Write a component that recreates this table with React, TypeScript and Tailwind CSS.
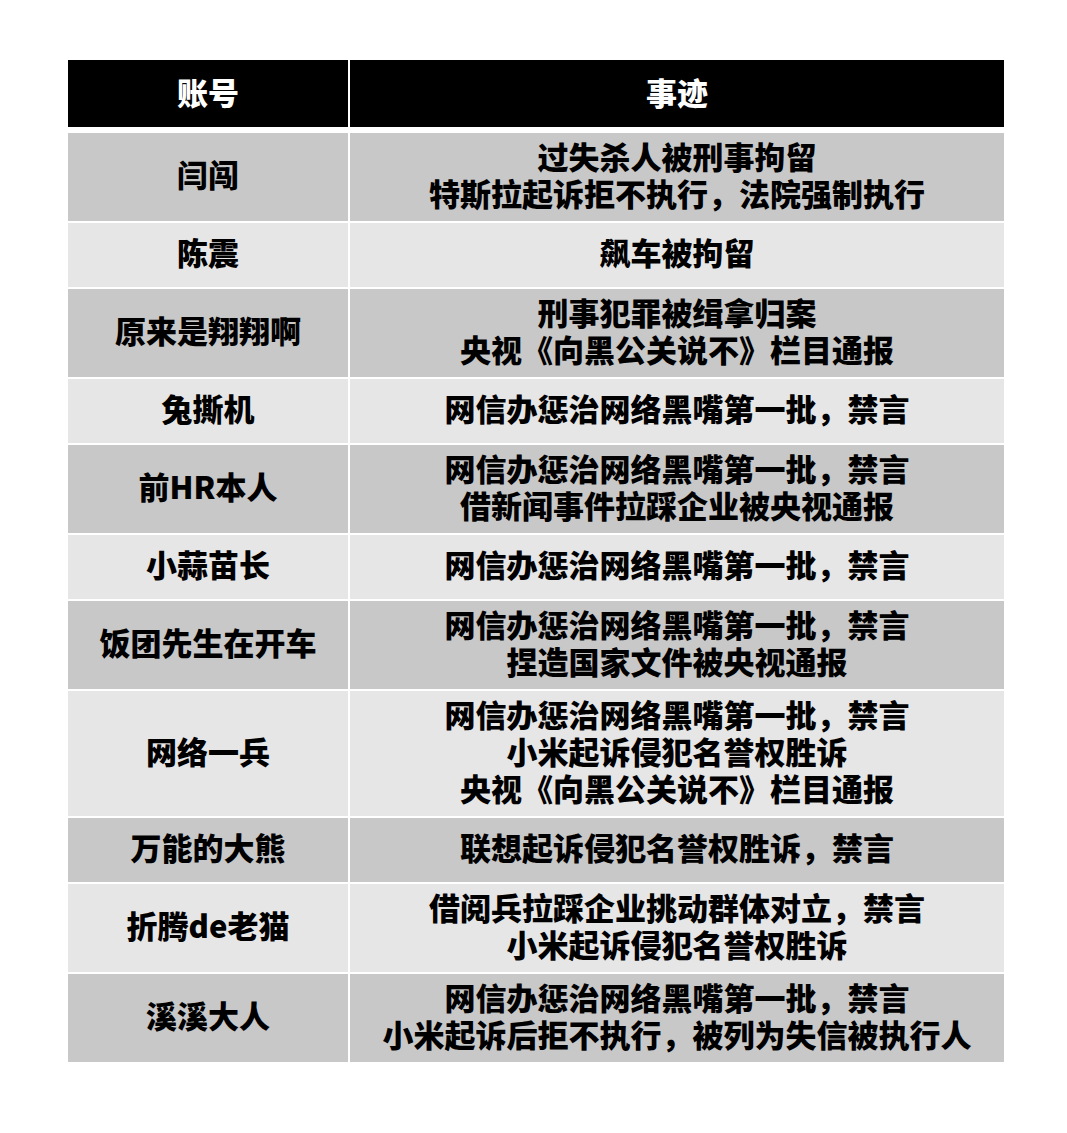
const rows: { name: string; events: string[]; tone: 'dark' | 'light' }[] = [
  { name: '闫闯', events: ['过失杀人被刑事拘留', '特斯拉起诉拒不执行，法院强制执行'], tone: 'dark' },
  { name: '陈震', events: ['飙车被拘留'], tone: 'light' },
  { name: '原来是翔翔啊', events: ['刑事犯罪被缉拿归案', '央视《向黑公关说不》栏目通报'], tone: 'dark' },
  { name: '兔撕机', events: ['网信办惩治网络黑嘴第一批，禁言'], tone: 'light' },
  { name: '前HR本人', events: ['网信办惩治网络黑嘴第一批，禁言', '借新闻事件拉踩企业被央视通报'], tone: 'dark' },
  { name: '小蒜苗长', events: ['网信办惩治网络黑嘴第一批，禁言'], tone: 'light' },
  { name: '饭团先生在开车', events: ['网信办惩治网络黑嘴第一批，禁言', '捏造国家文件被央视通报'], tone: 'dark' },
  {
    name: '网络一兵',
    events: ['网信办惩治网络黑嘴第一批，禁言', '小米起诉侵犯名誉权胜诉', '央视《向黑公关说不》栏目通报'],
    tone: 'light',
  },
  { name: '万能的大熊', events: ['联想起诉侵犯名誉权胜诉，禁言'], tone: 'dark' },
  { name: '折腾de老猫', events: ['借阅兵拉踩企业挑动群体对立，禁言', '小米起诉侵犯名誉权胜诉'], tone: 'light' },
  { name: '溪溪大人', events: ['网信办惩治网络黑嘴第一批，禁言', '小米起诉后拒不执行，被列为失信被执行人'], tone: 'dark' },
]

export default function App() {
  return (
    <div
      className="min-h-[1133px] w-full bg-white pt-[60px] pl-[68px]"
      style={{ fontFamily: '"Noto Sans CJK SC", "Noto Sans", sans-serif' }}
    >
      <div className="flex w-[936px] flex-col">
        {/* 表头 */}
        <div className="grid grid-cols-[280px_654px] gap-x-[2px]">
          <div className="flex h-[67px] items-center justify-center bg-black pb-[2px] text-[31px] font-black text-white">
            账号
          </div>
          <div className="flex h-[67px] items-center justify-center bg-black pb-[2px] text-[31px] font-black text-white">
            事迹
          </div>
        </div>

        <div className="mt-[6px] flex flex-col gap-y-[2px]">
          {rows.map((row) => {
            const bg = row.tone === 'dark' ? 'bg-[#c8c8c8]' : 'bg-[#e6e6e6]'
            return (
              <div key={row.name} className="grid min-h-[64px] grid-cols-[280px_654px] gap-x-[2px]">
                <div
                  className={`flex items-center justify-center pt-[3.5px] pb-[10.5px] text-[31px] font-black leading-[37px] text-black ${bg}`}
                >
                  {row.name}
                </div>
                <div
                  className={`flex flex-col items-center justify-center pt-[3.5px] pb-[10.5px] text-[31px] font-black leading-[37px] text-black ${bg}`}
                >
                  {row.events.map((e) => (
                    <div key={e} className="whitespace-nowrap">
                      {e}
                    </div>
                  ))}
                </div>
              </div>
            )
          })}
        </div>
      </div>
    </div>
  )
}
